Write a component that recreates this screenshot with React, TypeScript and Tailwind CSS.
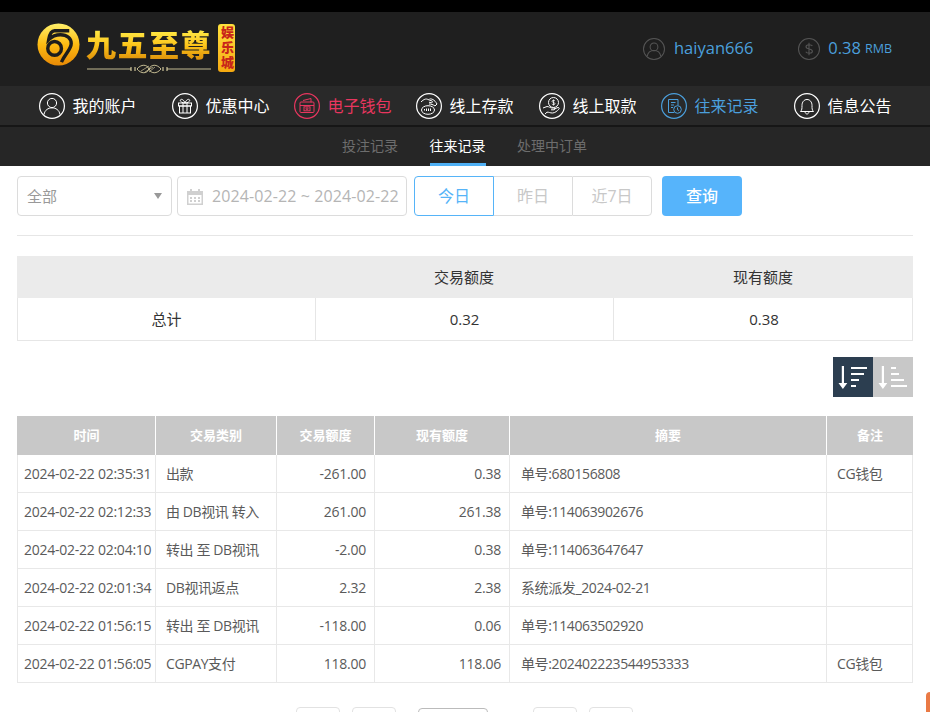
const font = { fontFamily: '"Open Sans", "Noto Sans CJK SC", sans-serif' };

const rows = [
  ["2024-02-22 02:35:31", "出款", "-261.00", "0.38", "单号:680156808", "CG钱包"],
  ["2024-02-22 02:12:33", "由 DB视讯 转入", "261.00", "261.38", "单号:114063902676", ""],
  ["2024-02-22 02:04:10", "转出 至 DB视讯", "-2.00", "0.38", "单号:114063647647", ""],
  ["2024-02-22 02:01:34", "DB视讯返点", "2.32", "2.38", "系统派发_2024-02-21", ""],
  ["2024-02-22 01:56:15", "转出 至 DB视讯", "-118.00", "0.06", "单号:114063502920", ""],
  ["2024-02-22 01:56:05", "CGPAY支付", "118.00", "118.06", "单号:202402223544953333", "CG钱包"],
];

function Ring({ children, className = "" }: { children: React.ReactNode; className?: string }) {
  return (
    <svg viewBox="0 0 26 26" fill="none" stroke="currentColor" strokeWidth="1" className={"w-[26px] h-[26px] shrink-0 " + className}>
      <circle cx="13" cy="13" r="12.4" strokeWidth="1.2" />
      {children}
    </svg>
  );
}

const icons = {
  user: (
    <>
      <circle cx="13" cy="10" r="4.6" />
      <path d="M5 21.5c.8-4.6 4.2-6.6 8-6.6s7.2 2 8 6.6" />
    </>
  ),
  gift: (
    <>
      <rect x="6.5" y="10" width="13" height="3" />
      <rect x="7.5" y="13" width="11" height="7" />
      <path d="M11 10v10M15 10v10M13 10c-1-3-3.5-4.5-4.5-3.2S10 10 13 10c3 0 5.5-1.900 4.500-3.200S14 7 13 10" />
    </>
  ),
  wallet: (
    <>
      <path d="M9 7.500l8-2v4" />
      <rect x="6" y="9" width="14" height="10.500" rx="1" />
      <path d="M6 12.500h14" />
      <rect x="10" y="13.800" width="6" height="4" />
      <circle cx="13" cy="15.800" r="1" />
    </>
  ),
  deposit: (
    <>
      <path d="M5 9c3-3 5-3.500 7-2.500l4 1.500c1 .5.500 2-1 1.700l-2-.5M13.500 6c2-.5 5 .5 7.500 5l-2 2c-2-1.500-4-2-6-2" />
      <ellipse cx="12" cy="17" rx="6.500" ry="4.300" />
      <path d="M8.500 17.500v-1.500M10.500 18v-2.500M12.500 18v-2.500M14.500 18v-2.500" />
    </>
  ),
  withdraw: (
    <>
      <circle cx="14.500" cy="9.500" r="5" />
      <path d="M14.500 6.500v6M16 8c-.5-.8-3-1-3 .3 0 1.500 3 .9 3 2.400 0 1.300-2.600 1.100-3.200.2" strokeWidth=".8" />
      <path d="M4 15l4-1.500c2 0 3.500 1.500 5 1.500h2c1.200 0 1.200 1.800 0 1.800h-3M15 16l4-1.500c1.200-.2 1.600 1 .8 1.800-1.500 1.500-3.800 3.700-6.300 3.700-2.500 0-3.500-1-5.500-.8L6 21" />
    </>
  ),
  record: (
    <>
      <path d="M13 19.500H7.500V6.500h9.500v6" />
      <path d="M10 9.500h4.500M10 12h3M10 14.500h2" />
      <circle cx="16.500" cy="16.500" r="3.800" />
      <path d="M16.500 14.500v2.200l1.500.8" />
    </>
  ),
  bell: (
    <>
      <path d="M6.500 18.500c1.500-1.500 1.500-3 1.500-6 0-3.500 2-6 5-6s5 2.500 5 6c0 3 0 4.500 1.500 6z" />
      <path d="M11 18.500c0 1.500 1 2.500 2 2.500s2-1 2-2.500" />
    </>
  ),
};

const navItems = [
  { label: "我的账户", icon: icons.user, tone: "text-white", gap: "" },
  { label: "优惠中心", icon: icons.gift, tone: "text-white", gap: "ml-[35.5px]" },
  { label: "电子钱包", icon: icons.wallet, tone: "text-[#e8365f]", gap: "ml-[24.5px]" },
  { label: "线上存款", icon: icons.deposit, tone: "text-white", gap: "ml-[24.5px]" },
  { label: "线上取款", icon: icons.withdraw, tone: "text-white", gap: "ml-[25.5px]" },
  { label: "往来记录", icon: icons.record, tone: "text-[#4b9fdc]", gap: "ml-[24.5px]" },
  { label: "信息公告", icon: icons.bell, tone: "text-white", gap: "ml-[35.5px]" },
];

function Logo() {
  return (
    <div className="flex items-start pl-[37px] pt-[11px]">
      <svg viewBox="0 0 44 44" className="w-[43px] h-[43px] shrink-0">
        <defs>
          <linearGradient id="coin" x1="0" y1="0" x2="0" y2="1">
            <stop offset="0" stopColor="#fff06a" />
            <stop offset="0.5" stopColor="#fdbb12" />
            <stop offset="1" stopColor="#e88a06" />
          </linearGradient>
        </defs>
        <circle cx="22" cy="22" r="21.500" fill="url(#coin)" />
        <path d="M33 8H18c-3 0-5 3-6 9 3-3 7-5 12-5 7 0 11 4 11 9 0 6-6 10-10 19" fill="none" stroke="#1d1d1d" strokeWidth="3.500" />
        <circle cx="18" cy="26" r="7" fill="none" stroke="#1d1d1d" strokeWidth="3.500" />
      </svg>
      <div className="ml-[6px] mt-[5px] flex flex-col items-center">
        <div className="h-[34px] text-[30px] leading-[34px] font-black tracking-[1.500px] text-transparent bg-clip-text bg-gradient-to-b from-[#fff04a] via-[#fcc51a] to-[#d98a08] whitespace-nowrap">
          九五至尊
        </div>
        <svg viewBox="0 0 124 10" className="w-[124px] h-[10px] mt-[2px]" fill="none" stroke="#efe3b0">
          <path d="M0 5h44M80 5h44" strokeWidth=".8" />
          <path d="M44 3v4M48 3v4M76 3v4M80 3v4" strokeWidth="1" />
          <path d="M50 5c4-5 10-5 12 0s8 5 12 0c-4-5-10-5-12 0s-8 5-12 0z" strokeWidth=".8" />
          <path d="M54 7l8-5M58 8l8-5M62 8l6-5" strokeWidth=".6" />
        </svg>
      </div>
      <div className="ml-[6px] mt-[1px] w-[17px] h-[48px] rounded-[3px] bg-gradient-to-b from-[#ffe23c] to-[#f5a90f] text-[#c8251a] text-[13px] leading-[17px] font-black tracking-[2px] flex items-center justify-center [writing-mode:vertical-rl]">
        娱乐城
      </div>
    </div>
  );
}

function Header() {
  return (
    <div className="h-[74px] bg-[#1f1f1f] flex justify-between">
      <Logo />
      <div className="flex items-center pr-[38px] pb-[1px] text-[#4b9fdc]">
        <Ring className="!w-[22px] !h-[22px] text-[#555]">
          <circle cx="13" cy="10.500" r="4.600" strokeWidth="1.200" />
          <path d="M5 21.500c.8-4.600 4.200-6.600 8-6.600s7.200 2 8 6.600" strokeWidth="1.200" />
        </Ring>
        <span className="ml-[9px] text-[16.500px]">haiyan666</span>
        <Ring className="!w-[22px] !h-[22px] text-[#555] ml-[45px]">
          <path d="M17 9.500c-1-2-7.500-2.300-7.500.8 0 3.700 7.500 1.800 7.500 5.400 0 3.200-6.500 2.900-7.800.6M13 5.500v15" strokeWidth="1.300" />
        </Ring>
        <span className="ml-[8px] text-[16.500px]">0.38</span>
        <span className="ml-[4px] text-[12.500px] mt-[2px]">RMB</span>
      </div>
    </div>
  );
}

function Nav() {
  return (
    <div className="h-[41px] bg-[#292929] border-b-2 border-b-[#161616] flex items-center pl-[39px]">
      {navItems.map((item) => (
        <div key={item.label} className={"flex items-center gap-[7.500px] text-[16px] " + item.tone + " " + item.gap}>
          <Ring>{item.icon}</Ring>
          <span className="whitespace-nowrap">{item.label}</span>
        </div>
      ))}
    </div>
  );
}

function SubNav() {
  return (
    <div className="h-[39px] bg-[#262626] flex justify-center gap-[31.500px] pr-[1px] text-[14px] text-[#6d6d6d]">
      <div className="leading-[38px]">投注记录</div>
      <div className="leading-[38px] h-[39px] text-white border-b-[3px] border-[#4fb0f5]">往来记录</div>
      <div className="leading-[38px]">处理中订单</div>
    </div>
  );
}

function Filters() {
  return (
    <div className="flex items-start pt-[10px] text-[16px]">
      <div className="w-[155px] h-[40px] border border-[#dcdcdc] rounded-[4px] flex items-center justify-between pl-[9px] pr-[9px] text-[#999]">
        <span className="text-[15px]">全部</span>
        <span className="w-0 h-0 border-x-[4px] border-x-transparent border-t-[6px] border-t-[#999]"></span>
      </div>
      <div className="ml-[5px] w-[230px] h-[40px] border border-[#dcdcdc] rounded-[4px] flex items-center pl-[9px] text-[#b5b5b5] whitespace-nowrap">
        <svg viewBox="0 0 16 17" className="w-[16px] h-[17px] shrink-0" fill="#d0d0d0">
          <path d="M0 3h3V1h2v2h6V1h2v2h3v14H0zm1.500 4v8.500h13V7z" />
          <path d="M3 9h2v2H3zM7 9h2v2H7zM11 9h2v2h-2zM3 12h2v2H3zM7 12h2v2H7zM11 12h2v2h-2z" />
        </svg>
        <span className="ml-[9px] text-[16px] tracking-[0.1px]">2024-02-22 ~ 2024-02-22</span>
      </div>
      <div className="ml-[7px] flex h-[40px] w-[238px] text-[#c8c8c8]">
        <div className="w-[80px] border border-[#56b4f8] rounded-l-[4px] text-[#56b4f8] flex items-center justify-center">今日</div>
        <div className="w-[78px] border-y border-[#dcdcdc] flex items-center justify-center">昨日</div>
        <div className="w-[80px] border border-[#dcdcdc] rounded-r-[4px] flex items-center justify-center">近7日</div>
      </div>
      <button className="ml-[10px] w-[80px] h-[40px] rounded-[4px] bg-[#56b4fb] text-white font-medium">查询</button>
    </div>
  );
}

function Summary() {
  return (
    <div className="mt-[20px] text-[15px] text-[#333]">
      <div className="grid grid-cols-[298px_298px_300px] h-[42px] bg-[#ebebeb] items-center text-center">
        <div></div>
        <div>交易额度</div>
        <div>现有额度</div>
      </div>
      <div className="grid grid-cols-[298px_298px_300px] h-[43px] border-x border-b border-[#e6e6e6] text-center leading-[42px]">
        <div className="border-r border-[#e6e6e6]">总计</div>
        <div className="border-r border-[#e6e6e6]">0.32</div>
        <div>0.38</div>
      </div>
    </div>
  );
}

function SortButtons() {
  return (
    <div className="mt-[16px] flex justify-end">
      <div className="w-[40px] h-[40px] bg-[#2c3e50] flex items-center justify-center">
        <svg viewBox="0 0 30 24" className="w-[30px] h-[24px]" fill="#fff">
          <path d="M3.800 1h2.200v17h3.300l-4.400 6-4.400-6h3.300z" />
          <path d="M13 2h16v2H13zM13 8h13v2H13zM13 14h8v2h-8zM13 20h5v2h-5z" />
        </svg>
      </div>
      <div className="w-[40px] h-[40px] bg-[#c8c8c8] flex items-center justify-center">
        <svg viewBox="0 0 30 24" className="w-[30px] h-[24px]" fill="#fff">
          <path d="M3.800 1h2.200v17h3.300l-4.400 6-4.400-6h3.300z" />
          <path d="M13 2h5v2h-5zM13 8h8v2h-8zM13 14h13v2H13zM13 20h16v2H13z" />
        </svg>
      </div>
    </div>
  );
}

function Records() {
  const heads = ["时间", "交易类别", "交易额度", "现有额度", "摘要", "备注"];
  const cellPad = ["pl-[6px]", "pl-[10px] tracking-[-0.4px]", "pr-[8px] justify-end", "pr-[8px] justify-end", "pl-[11px] tracking-[-0.38px]", "pl-[10px] tracking-[-0.4px]"];
  return (
    <div className="mt-[19px] text-[14px] tracking-[-0.25px] text-[#5a5a5a]">
      <div className="grid grid-cols-[138px_121px_98px_135px_317px_86px] h-[39px] pl-px bg-[#c8c8c8] text-white font-bold tracking-normal text-[13px]">
        {heads.map((h, i) => (
          <div key={h} className={"flex items-center justify-center " + (i < 5 ? "border-r border-white" : "")}>
            {h}
          </div>
        ))}
      </div>
      {rows.map((row) => (
        <div key={row[0]} className="grid grid-cols-[138px_121px_98px_135px_317px_85px] h-[38px] border-x border-b border-[#e8e8e8]">
          {row.map((cell, i) => (
            <div key={i} className={"flex items-center whitespace-nowrap " + cellPad[i] + (i < 5 ? " border-r border-[#e8e8e8]" : "")}>
              {cell}
            </div>
          ))}
        </div>
      ))}
    </div>
  );
}

function Pager() {
  const box = "h-[32px] border border-[#e2e2e2] rounded-[4px]";
  return (
    <div className="mt-[24px] flex pl-[279px]">
      <div className={"w-[44px] " + box}></div>
      <div className={"ml-[12px] w-[44px] " + box}></div>
      <div className="ml-[22px] w-[70px] h-[32px] mt-[1px] border border-[#bbb] rounded-[4px]"></div>
      <div className={"ml-[45px] w-[44px] " + box}></div>
      <div className={"ml-[12px] w-[44px] " + box}></div>
    </div>
  );
}

export default function App() {
  return (
    <div className="relative h-screen overflow-hidden bg-white" style={font}>
      <div className="h-[12px] bg-black"></div>
      <Header />
      <Nav />
      <SubNav />
      <div className="px-[17px]">
        <Filters />
        <div className="mt-[19px] h-px bg-[#e6e6e6]"></div>
        <Summary />
        <SortButtons />
        <Records />
        <Pager />
      </div>
      <div className="absolute right-0 bottom-0 w-[4px] h-[20px] rounded-tl-[4px] bg-[#ea7a45]"></div>
    </div>
  );
}
